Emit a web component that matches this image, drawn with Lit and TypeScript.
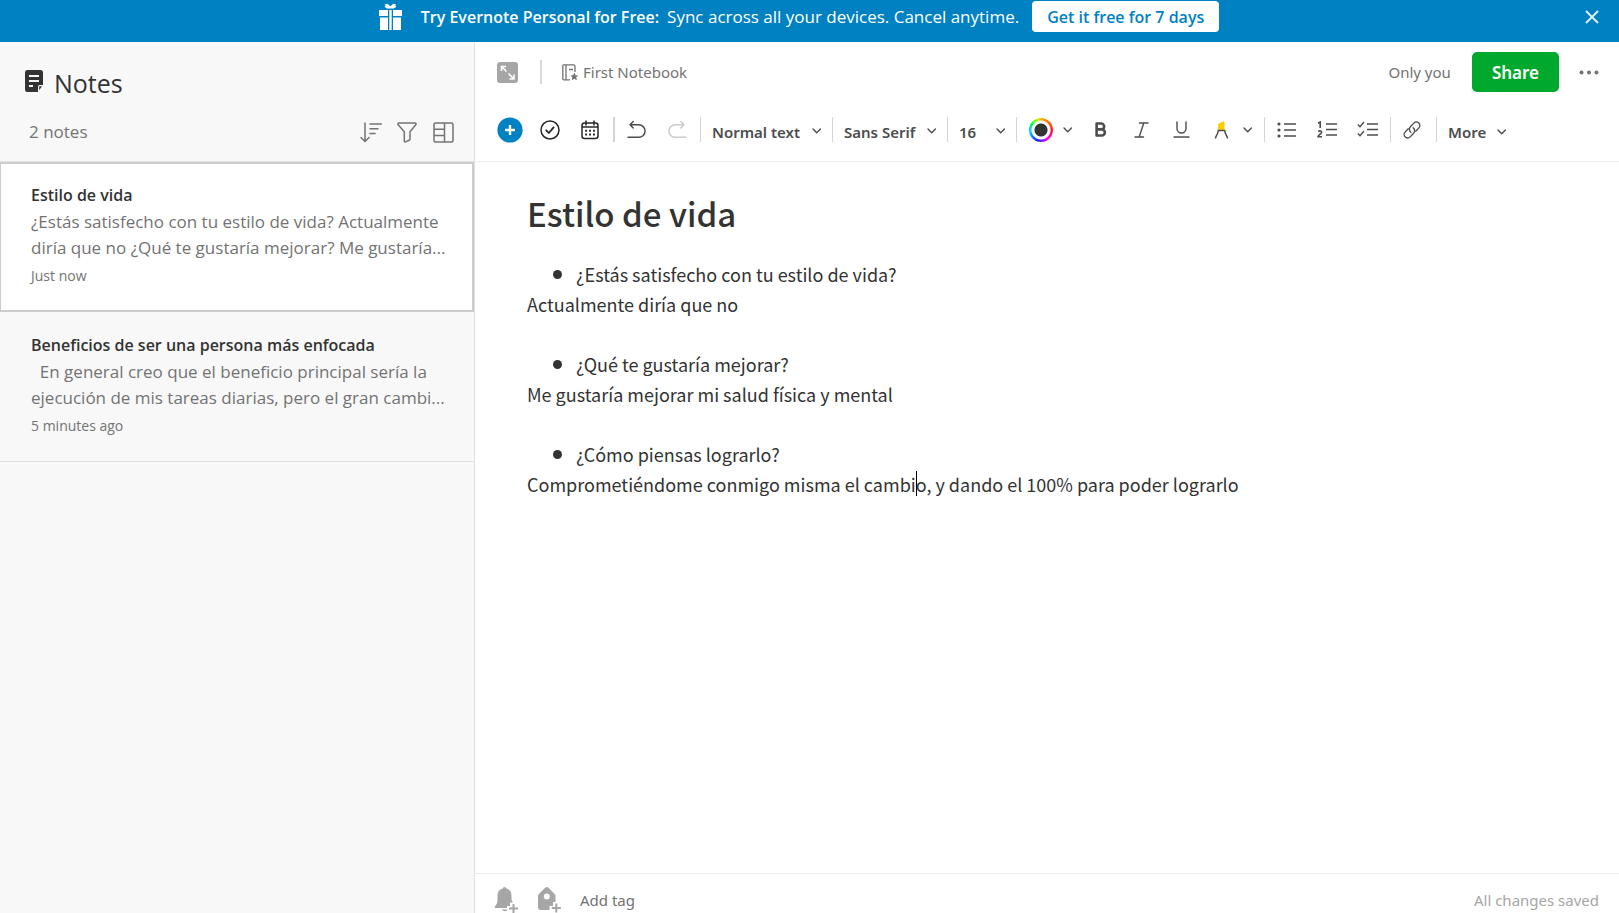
import { LitElement, html, svg, css } from "lit";
import { customElement, property } from "lit/decorators.js";

interface Note {
  title: string;
  preview: string;
  time: string;
  selected: boolean;
}

const NOTES: Note[] = [
  {
    title: "Estilo de vida",
    preview: "¿Estás satisfecho con tu estilo de vida? Actualmente diría que no ¿Qué te gustaría mejorar? Me gustaría...",
    time: "Just now",
    selected: true,
  },
  {
    title: "Beneficios de ser una persona más enfocada",
    preview: "\u00a0 En general creo que el beneficio principal sería la ejecución de mis tareas diarias, pero el gran cambi...",
    time: "5 minutes ago",
    selected: false,
  },
];

const chevron = svg`<path d="M1 1l3.7 3.7L8.400 1" fill="none" stroke="currentColor" stroke-width="1.4" stroke-linecap="round" stroke-linejoin="round"/>`;
const chevronIcon = html`<svg class="chevron" width="10" height="6" viewBox="0 0 10 6" aria-hidden="true">${chevron}</svg>`;

const reset = css`
  :host, * { box-sizing: border-box; }
  button, input, select { font: inherit; color: inherit; margin: 0; padding: 0; border: 0; background: none; }
  button { display: flex; align-items: center; justify-content: center; cursor: pointer; }
  svg { display: block; flex: none; }
`;

@customElement("promo-banner")
export class PromoBanner extends LitElement {
  static styles = [reset, css`
    :host { display: flex; height: 42px; padding: 1px 16px 10px; background: #0081c2; color: #fff; font-family: "Open Sans", "Noto Sans", sans-serif; font-size: 17px; }
    .offer { flex: 1; display: flex; align-items: center; justify-content: center; white-space: nowrap; }
    .gift { margin-right: 18px; }
    .lead { font-size: 16px; font-weight: 600; margin-right: 8px; }
    .cta { height: 31px; padding: 0 15px; margin-left: 13px; border-radius: 4px; background: #fff; color: #0081c2; font-weight: 600; font-size: 16px; }
    .close { width: 22px; color: #e3f1f9; }
  `];
  render() {
    return html`
      <div class="offer">
        <svg class="gift" width="25" height="27" viewBox="0 0 25 27" fill="#fff" aria-hidden="true">
          <path d="M6.500 1.500l3-.8 2.900 2.600L15.300.7l3 .8-1.100 1 1.100 1.300-2.400 1.700h-7L6.500 3.800l1.100-1.300z"/>
          <path d="M1 7h9v6H1zM11.300 7h2.400v20h-2.400zM15 7h9v6h-9zM2 14.500h8V27H2zM15 14.500h8V27h-8z"/>
        </svg>
        <span class="lead">Try Evernote Personal for Free:</span>
        <span>Sync across all your devices. Cancel anytime.</span>
        <button class="cta">Get it free for 7 days</button>
      </div>
      <button class="close" aria-label="Close">
        <svg width="14" height="14" viewBox="0 0 14 14" fill="none" stroke="currentColor" stroke-width="1.800"><path d="M1 1l12 12M13 1L1 13"/></svg>
      </button>`;
  }
}

@customElement("note-list")
export class NoteList extends LitElement {
  @property({ attribute: false }) notes: Note[] = [];
  static styles = [reset, css`
    :host { display: block; background: #f8f8f8; border-right: 1px solid #e0e0e0; font-family: "Open Sans", "Noto Sans", sans-serif; }
    .head { height: 120px; padding: 21px 20px 0 25px; border-bottom: 1px solid #e6e6e6; }
    .title { display: flex; align-items: center; gap: 11px; height: 40px; }
    .title svg { margin-bottom: 4px; }
    h1 { margin: 0; font-size: 25px; font-weight: 400; color: #333; line-height: 40px; }
    .tools { display: flex; align-items: center; height: 56px; padding-left: 4px; color: #737373; }
    .count { flex: 1; font-size: 17px; }
    .tools button { width: 36px; height: 30px; margin-top: 2px; }
    .tools button:last-child { margin-right: -7px; }
    ul { list-style: none; margin: 0; padding: 0; }
    .note { display: block; width: 100%; text-align: left; padding: 20px 24px 20px 31px; border-bottom: 1px solid #e0e0e0; color: #737373; }
    .selected { background: #fff; padding: 18px 22px 19px 30px; border: 2px solid #ccc; border-left-width: 1px; }
    .name, .preview, .time { display: block; }
    .name { font-size: 16px; line-height: 27px; font-weight: 600; color: #333; }
    .preview { font-size: 17px; line-height: 26px; }
    .time { font-size: 14px; line-height: 30px; }
  `];
  render() {
    return html`
      <div class="head">
        <div class="title">
          <svg width="18" height="22" viewBox="0 0 18 22" aria-hidden="true">
            <path d="M2.500 0h13A2.500 2.500 0 0 1 18 2.500V15h-3.500a1.500 1.500 0 0 0-1.500 1.500V22H2.500A2.500 2.500 0 0 1 0 19.500v-17A2.500 2.500 0 0 1 2.500 0zM14.200 16.200H17l-2.800 4z" fill="#333"/>
            <path d="M4 6h10M4 11h10M4 16h4" stroke="#f8f8f8" stroke-width="1.800"/>
          </svg>
          <h1>Notes</h1>
        </div>
        <div class="tools">
          <span class="count">2 notes</span>
          <button aria-label="Sort">
            <svg width="22" height="21" viewBox="0 0 22 21" fill="none" stroke="currentColor" stroke-width="1.500" stroke-linecap="round" stroke-linejoin="round"><path d="M5 1v18M1 15.500l4 4 4-4M10 2h11.300M10 6.800h8M10 11.600h5"/></svg>
          </button>
          <button aria-label="Filter">
            <svg width="20" height="21" viewBox="0 0 20 21" fill="none" stroke="currentColor" stroke-width="1.500" stroke-linejoin="round"><path d="M2 1h16c1 0 1.300 1 .8 1.800L13 9.700v7.300c0 .6-.3 1-.8 1.300l-3.700 1.600c-.8.300-1.200 0-1.200-.8V9.700L1.200 2.800C.7 2 1 1 2 1z"/></svg>
          </button>
          <button aria-label="View options">
            <svg width="21" height="21" viewBox="0 0 21 21" fill="none" stroke="currentColor" stroke-width="1.500"><rect x="1" y="1" width="19" height="19" rx="1.500"/><path d="M11.500 1v19M1 7.300h10.500M1 13.600h10.500"/></svg>
          </button>
        </div>
      </div>
      <ul>
        ${this.notes.map((n) => html`
          <li>
            <button class="note ${n.selected ? "selected" : ""}">
              <span class="name">${n.title}</span>
              <span class="preview">${n.preview}</span>
              <span class="time">${n.time}</span>
            </button>
          </li>`)}
      </ul>`;
  }
}

@customElement("note-header")
export class NoteHeader extends LitElement {
  static styles = [reset, css`
    :host { display: flex; align-items: center; height: 60px; padding: 0 20px 0 22px; color: #737373; font-size: 15px; }
    .expand { padding-right: 22px; height: 24px; border-right: 2px solid #d9d9d9; }
    .notebook { display: flex; align-items: center; gap: 5px; margin-left: 20px; color: inherit; text-decoration: none; }
    .audience { margin-left: auto; }
    .share { height: 40px; padding: 0 20px; margin: 0 20px 0 21px; border-radius: 5px; background: #00a82d; color: #fff; font-size: 17px; font-weight: 600; }
  `];
  render() {
    return html`
      <button class="expand" aria-label="Expand note">
        <svg width="21" height="21" viewBox="0 0 21 21"><rect width="21" height="21" rx="3" fill="#a6a6a6"/><path d="M4.500 9V4.500H9M4.500 4.500l5 5M17 12.500V17h-4.500M17 17l-5.500-5.500" fill="none" stroke="#fff" stroke-width="1.600"/></svg>
      </button>
      <a class="notebook" href="#">
        <svg width="16" height="17" viewBox="0 0 16 17" fill="none" stroke="currentColor" stroke-width="1.300" aria-hidden="true">
          <path d="M13 8V2.200C13 1.300 12.500.8 11.700.8H1.800C1.200.8.800 1.200.800 1.800v13c0 .6.400 1 1 1H8M4 .8v15M7 5.500h4"/>
          <path d="M12.300 8.500l1.200 2.700 2.800.2-2.100 1.900.7 2.900-2.600-1.500-2.600 1.500.7-2.900-2.100-1.900 2.800-.2z" fill="currentColor" stroke="none"/>
        </svg>
        First Notebook
      </a>
      <span class="audience">Only you</span>
      <button class="share">Share</button>
      <button aria-label="More actions">
        <svg width="20" height="5" viewBox="0 0 20 5" fill="currentColor"><circle cx="2.500" cy="2.500" r="2"/><circle cx="10" cy="2.500" r="2"/><circle cx="17.500" cy="2.500" r="2"/></svg>
      </button>`;
  }
}

@customElement("format-toolbar")
export class FormatToolbar extends LitElement {
  static styles = [reset, css`
    :host { display: flex; align-items: center; height: 60px; padding: 0 0 4px 15px; border-bottom: 1px solid #f0f0f0; color: #4d4d4d; font-size: 15px; font-weight: 600; }
    .group { display: flex; align-items: center; height: 25px; padding-right: 3px; border-right: 1px solid #d4d4d4; }
    .insert { border-right-width: 2px; }
    .last { border-right: 0; padding-right: 0; }
    .tool { width: 40px; height: 32px; }
    .narrow { width: 42px; }
    .drop { width: 14px; height: 32px; margin-right: 6px; }
    .dark { color: #262626; }
    .faded { color: #ccc; }
    .pick { display: grid; align-items: center; height: 25px; border-right: 1px solid #d4d4d4; }
    .pick select, .pick .chevron { grid-area: 1 / 1; }
    .pick select { appearance: none; width: 100%; padding: 4px 24px 0 11px; outline: 0; font-weight: 600; }
    .pick .chevron { justify-self: end; margin: 2px 10px 0 0; pointer-events: none; }
    .style { width: 132px; }
    .family { width: 115px; }
    .size { width: 69px; }
    .colour { padding: 0 0 0 4px; }
    .ring { display: grid; width: 24px; height: 24px; border-radius: 50%; background: radial-gradient(circle, #333 0 6px, #fff 7px 9px, transparent 10px), conic-gradient(#ffb000, #ff2020 25%, #f0f 40%, #2020ff 55%, #00d0ff 72%, #00ff40 85%, #c0ff00 95%, #ffb000); }
    .more { gap: 11px; padding: 4px 0 0 11px; }
  `];
  render() {
    return html`
      <div class="group insert">
        <button class="tool" aria-label="Insert">
          <svg width="26" height="26" viewBox="0 0 26 26"><circle cx="13" cy="13" r="12.600" fill="#0081c2"/><path d="M13 8v10M8 13h10" stroke="#fff" stroke-width="2.400"/></svg>
        </button>
        <button class="tool dark" aria-label="Task">
          <svg width="20" height="20" viewBox="0 0 20 20" fill="none" stroke="currentColor" stroke-width="1.500" stroke-linecap="round" stroke-linejoin="round"><circle cx="10" cy="10" r="9"/><path d="M6.200 10.300l2.600 2.700 4.800-5.600" stroke-width="1.800"/></svg>
        </button>
        <button class="tool dark" aria-label="Calendar">
          <svg width="18" height="20" viewBox="0 0 18 20" fill="none" stroke="currentColor" stroke-width="1.500"><rect x="1" y="3" width="16" height="15.500" rx="2.500"/><path d="M1 7h16M5 .5v5M13 .5v5"/><path d="M4.200 10.800h10M4.200 14.500h10" stroke-width="1.900" stroke-dasharray="1.900 2"/></svg>
        </button>
      </div>
      <div class="group">
        <button class="tool narrow" aria-label="Undo">
          <svg width="19" height="19" viewBox="0 0 19 19" fill="none" stroke="currentColor" stroke-width="1.500" stroke-linecap="round" stroke-linejoin="round"><path d="M6.200 1.500L3 4.800 6.200 8M3.300 4.800h8.500a6 6 0 0 1 0 12.500H1"/></svg>
        </button>
        <button class="tool faded" aria-label="Redo" disabled>
          <svg width="19" height="19" viewBox="0 0 19 19" fill="none" stroke="currentColor" stroke-width="1.500" stroke-linecap="round" stroke-linejoin="round"><path d="M12.800 1.500L16 4.800 12.800 8M15.700 4.800H7.200a6 6 0 0 0 0 12.500H18"/></svg>
        </button>
      </div>
      <label class="pick style"><select aria-label="Text style"><option>Normal text</option></select>${chevronIcon}</label>
      <label class="pick family"><select aria-label="Font"><option>Sans Serif</option></select>${chevronIcon}</label>
      <label class="pick size"><select aria-label="Font size"><option>16</option></select>${chevronIcon}</label>
      <div class="group last colour">
        <button class="tool" aria-label="Text colour"><span class="ring"></span></button>
        <button class="drop" aria-label="Choose text colour">${chevronIcon}</button>
      </div>
      <div class="group">
        <button class="tool" aria-label="Bold">
          <svg width="12" height="15" viewBox="0 0 12 15" fill="none" stroke="currentColor" stroke-width="2.600" stroke-linejoin="round"><path d="M1.600 1.500h4.600a2.900 2.900 0 0 1 0 5.900H1.600zM1.600 7.400h5.200a3 3 0 0 1 0 6.100H1.600z"/></svg>
        </button>
        <button class="tool" aria-label="Italic">
          <svg width="15" height="16" viewBox="0 0 15 16" fill="none" stroke="currentColor" stroke-width="1.400" stroke-linecap="round"><path d="M5.500 1H14M1 15h8.500M9.800 1L5.200 15"/></svg>
        </button>
        <button class="tool" aria-label="Underline">
          <svg width="17" height="17" viewBox="0 0 17 17" fill="none" stroke="currentColor" stroke-width="1.400" stroke-linecap="round"><path d="M4 1v6.500a4.500 4.500 0 0 0 9 0V1M1 16h15"/></svg>
        </button>
        <button class="tool" aria-label="Highlight">
          <svg width="15" height="18" viewBox="0 0 15 18" fill="none" stroke="currentColor" stroke-width="1.500"><path d="M4.700 3L10 .8V8.500H4.700z" fill="#fc0" stroke="#fc0" stroke-width="1"/><path d="M1.500 17.500c0-3 2.700-4 2.700-8h6.600c0 4 2.700 5 2.700 8"/></svg>
        </button>
        <button class="drop" aria-label="Choose highlight">${chevronIcon}</button>
      </div>
      <div class="group">
        <button class="tool narrow" aria-label="Bulleted list">
          <svg width="19" height="16" viewBox="0 0 19 16" fill="none" stroke="currentColor" stroke-width="1.400"><path d="M7 2h12M7 8h12M7 14h12"/><g fill="currentColor" stroke="none"><circle cx="2" cy="2" r="1.600"/><circle cx="2" cy="8" r="1.600"/><circle cx="2" cy="14" r="1.600"/></g></svg>
        </button>
        <button class="tool" aria-label="Numbered list">
          <svg width="20" height="17" viewBox="0 0 20 17" fill="none" stroke="currentColor" stroke-width="1.400"><path d="M9 3h11M9 8.500h11M9 14h11"/><path d="M1 2.200L3.200 1v6M1.200 10.600c1.500-1.400 3.700-.6 3.300 1C4.200 12.800 1.200 14 1 15.800h4" stroke-width="1.600"/></svg>
        </button>
        <button class="tool" aria-label="Checklist">
          <svg width="21" height="17" viewBox="0 0 21 17" fill="none" stroke="currentColor" stroke-width="1.400"><path d="M10 3h11M10 8.500h11M10 14h11M.8 3.500l2.200 2.300L7 1M.8 12.500L3 14.800 7 10"/></svg>
        </button>
      </div>
      <div class="group">
        <button class="tool narrow" aria-label="Link">
          <svg width="18" height="18" viewBox="0 0 24 24" fill="none" stroke="currentColor" stroke-width="1.800" stroke-linecap="round" stroke-linejoin="round"><path d="M10.500 15a5 5 0 0 1-.7-7.300l4.700-4.900a4.600 4.600 0 0 1 6.700 6.400l-4.200 4.400"/><path d="M13.500 9a5 5 0 0 1 .7 7.300l-4.700 4.900a4.600 4.600 0 0 1-6.700-6.400L7 10.400"/></svg>
        </button>
      </div>
      <button class="more">More ${chevronIcon}</button>`;
  }
}

@customElement("note-editor")
export class NoteEditor extends LitElement {
  static styles = [reset, css`
    :host { display: block; padding: 23px 52px; font-family: "Noto Sans CJK SC", "Noto Sans", sans-serif; color: #333; font-size: 18px; line-height: 30px; }
    h2 { margin: 0 0 18px; font-size: 33px; line-height: 56px; font-weight: 500; }
    p { margin: 0; min-height: 30px; }
    ul { margin: 0; padding: 0 0 0 26px; list-style: none; }
    li { display: flex; align-items: center; gap: 14px; }
    li::before { content: ""; width: 9px; height: 9px; border-radius: 50%; background: #333; }
    .caret { position: relative; }
    .caret::after { content: ""; position: absolute; left: 0; top: 0; width: 1px; height: 25px; background: #000; }
  `];
  render() {
    return html`
      <h2>Estilo de vida</h2>
      <ul><li>¿Estás satisfecho con tu estilo de vida?</li></ul>
      <p>Actualmente diría que no</p>
      <p></p>
      <ul><li>¿Qué te gustaría mejorar?</li></ul>
      <p>Me gustaría mejorar mi salud física y mental</p>
      <p></p>
      <ul><li>¿Cómo piensas lograrlo?</li></ul>
      <p>Comprometiéndome conmigo misma el cambi<span class="caret"></span>o, y dando el 100% para poder lograrlo</p>`;
  }
}

@customElement("note-footer")
export class NoteFooter extends LitElement {
  static styles = [reset, css`
    :host { display: flex; align-items: center; height: 40px; padding: 12px 20px 0 19px; border-top: 1px solid #ebebeb; color: #a6a6a6; font-size: 15px; overflow: hidden; }
    .icon { margin-right: 18px; }
    .tag { flex: 1; min-width: 0; outline: 0; }
    .tag::placeholder { color: #737373; opacity: 1; }
  `];
  render() {
    return html`
      <button class="icon" aria-label="Add reminder">
        <svg width="25" height="26" viewBox="0 0 25 26" fill="#a6a6a6"><path d="M10.500 0c1.200 0 1.700.8 1.800 1.600 3.500.8 5.200 3.600 5.200 7v4.500l1.500 2.500h-3v3.400h-3V21H1.500c-.8 0-1.100-.7-.7-1.400C2.500 17.500 3.500 16 3.500 13V8.600c0-3.400 1.700-6.200 5.200-7C8.800.8 9.300 0 10.500 0zM8 22.500h5.500c-.5 2.300-5 2.300-5.500 0z"/><path d="M19.500 17v9M15 21.500h9" stroke="#a6a6a6" stroke-width="2"/></svg>
      </button>
      <button class="icon" aria-label="Tags">
        <svg width="25" height="26" viewBox="0 0 25 26" fill="#a6a6a6"><path fill-rule="evenodd" d="M9.800 0c.7 0 1.100.2 1.600.7l6.400 6.500c.5.500.7 1 .7 1.700V15h-2.500v4h-3.500v4H3.500C2 23 1 22 1 20.500V8.900c0-.7.2-1.200.7-1.700L8.200.7C8.700.2 9.100 0 9.800 0zM9.800 6.500a3 3 0 1 0 0 6 3 3 0 0 0 0-6z"/><path d="M19.300 16.500v9M14.800 21h9" stroke="#a6a6a6" stroke-width="2"/></svg>
      </button>
      <input class="tag" aria-label="Add tag" placeholder="Add tag">
      <span>All changes saved</span>`;
  }
}

@customElement("app-root")
export class AppRoot extends LitElement {
  static styles = css`
    :host { display: grid; grid-template-rows: auto 1fr; height: 100vh; background: #fff; font-family: "Noto Sans", "Open Sans", sans-serif; overflow: hidden; }
    .body { display: grid; grid-template-columns: 475px 1fr; min-height: 0; }
    .main { display: flex; flex-direction: column; min-width: 0; }
    .editor { flex: 1; min-height: 0; overflow: hidden; }
  `;
  render() {
    return html`
      <promo-banner></promo-banner>
      <div class="body">
        <note-list .notes=${NOTES}></note-list>
        <main class="main">
          <note-header></note-header>
          <format-toolbar></format-toolbar>
          <note-editor class="editor"></note-editor>
          <note-footer></note-footer>
        </main>
      </div>`;
  }
}
